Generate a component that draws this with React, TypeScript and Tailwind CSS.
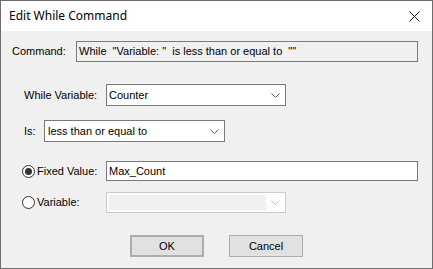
import React from "react";

function Chevron({ color = "#606060" }: { color?: string }) {
  return (
    <svg width="9" height="5" viewBox="0 0 9 5" className="shrink-0">
      <path d="M0.5 0.5 L4.5 4.5 L8.5 0.5" fill="none" stroke={color} strokeWidth="1" />
    </svg>
  );
}

function Radio({ checked }: { checked?: boolean }) {
  return (
    <span className="w-[13px] h-[13px] rounded-full border border-[#333333] bg-white flex items-center justify-center shrink-0">
      {checked && <span className="w-[7px] h-[7px] rounded-full bg-[#333333]" />}
    </span>
  );
}

export default function App() {
  return (
    <div className="w-[433px] h-[269px] border border-[#6d6d6d] flex flex-col font-['Liberation_Sans',Arial,sans-serif] text-[11px] text-black leading-none">
      {/* Title bar */}
      <div className="h-[30px] bg-white flex items-center justify-between pl-[8px] pr-[12px] shrink-0">
        <span className="font-['Noto_Sans',sans-serif] text-[12px]">Edit While Command</span>
        <svg width="11" height="11" viewBox="0 0 11 11">
          <path d="M0.5 0.5 L10.5 10.5 M10.5 0.5 L0.5 10.5" stroke="#111111" strokeWidth="1" />
        </svg>
      </div>

      {/* Body */}
      <div className="flex-1 bg-[#f0f0f0] flex flex-col pt-[10px]">
        {/* Command */}
        <div className="flex items-center">
          <span className="pl-[11px] w-[75px]">Command:</span>
          <div className="w-[342px] h-[21px] border border-[#7a7a7a] bg-[#f0f0f0] flex items-center px-[2px] whitespace-pre">
            {'While  "Variable: "  is less than or equal to  ""'}
          </div>
        </div>

        {/* While Variable */}
        <div className="flex items-center mt-[22px] pl-[23px]">
          <span className="w-[82px]">While Variable:</span>
          <div className="w-[180px] h-[22px] border border-[#7a7a7a] bg-white flex items-center justify-between pl-[2px] pr-[5px]">
            <span>Counter</span>
            <Chevron />
          </div>
        </div>

        {/* Is */}
        <div className="flex items-center mt-[14px] pl-[23px]">
          <span className="w-[20px]">Is:</span>
          <div className="w-[181px] h-[22px] border border-[#7a7a7a] bg-white flex items-center justify-between pl-[3px] pr-[5px]">
            <span>less than or equal to</span>
            <Chevron />
          </div>
        </div>

        {/* Fixed Value */}
        <div className="flex items-center mt-[19px] pl-[21px]">
          <div className="w-[84px] flex items-center gap-[2px]">
            <Radio checked />
            <span>Fixed Value:</span>
          </div>
          <div className="w-[312px] h-[20px] border border-[#7a7a7a] bg-white flex items-center pl-[2px]">
            Max_Count
          </div>
        </div>

        {/* Variable */}
        <div className="flex items-center mt-[11px] pl-[21px]">
          <div className="w-[84px] flex items-center gap-[2px]">
            <Radio />
            <span>Variable:</span>
          </div>
          <div className="w-[180px] h-[21px] border border-[#cccccc] bg-[#fcfcfc] flex items-center justify-between p-[2px] pr-[5px]">
            <div className="w-[157px] h-full bg-[#f0f0f0]" />
            <Chevron color="#bfbfbf" />
          </div>
        </div>

        {/* Buttons */}
        <div className="flex items-center mt-[22px] pl-[129px] gap-[25px]">
          <button className="w-[74px] h-[22px] border-2 border-[#adadad] bg-[#e1e1e1] flex items-center justify-center">
            OK
          </button>
          <button className="w-[74px] h-[22px] border border-[#adadad] bg-[#e1e1e1] flex items-center justify-center">
            Cancel
          </button>
        </div>
      </div>
    </div>
  );
}
